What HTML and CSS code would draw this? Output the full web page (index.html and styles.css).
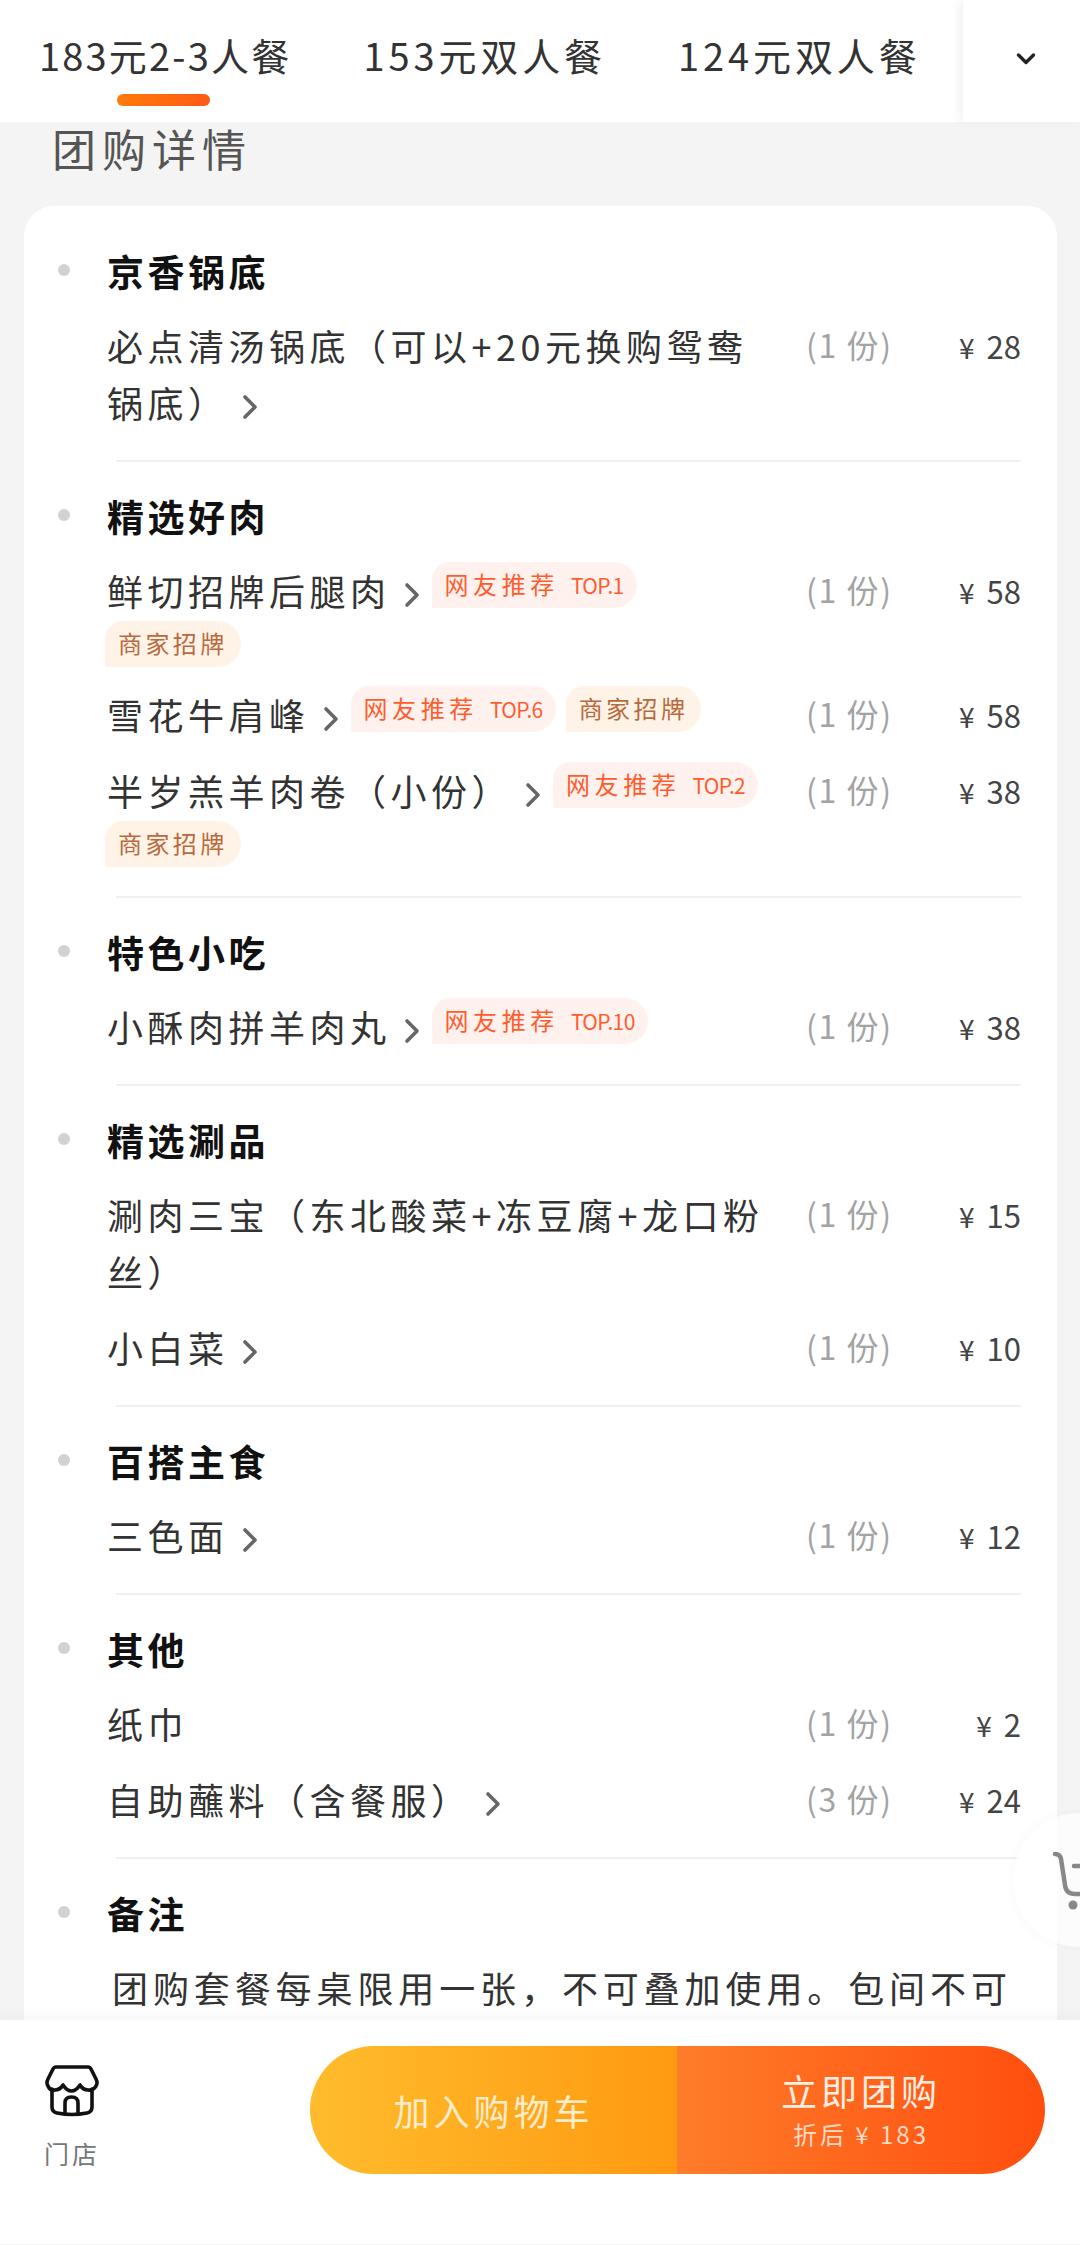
FILE: index.html
```html
<!DOCTYPE html>
<html lang="zh-CN">
<head>
  <meta charset="UTF-8" />
  <meta name="viewport" content="width=device-width, initial-scale=1.0"/>
  <title>团购详情</title>
  <link rel="stylesheet" href="styles.css">
</head>
<body>
  <svg class="sprite" width="0" height="0">
    <symbol id="chevron" viewBox="0 0 16 26">
      <path d="M3 3 L13 13 L3 23" fill="none" stroke="currentColor" stroke-width="3.6" stroke-linecap="round" stroke-linejoin="round"></path>
    </symbol>
  </svg>

  <div class="page">
    <header class="topBar">
      <div class="tabs">
        <span class="tab active">183元2-3人餐</span>
        <span class="tab">153元双人餐</span>
        <span class="tab">124元双人餐</span>
      </div>
      <div class="more">
        <svg width="20" height="14" viewBox="0 0 20 14">
          <path d="M2.5 3 L10 10.5 L17.5 3" fill="none" stroke="#222" stroke-width="3.4" stroke-linecap="round" stroke-linejoin="round"></path>
        </svg>
      </div>
    </header>

    <main class="content">
      <h2 class="title">团购详情</h2>

      <div class="card">
        <section class="group">
          <h3 class="groupHead"><i class="dot"></i>京香锅底</h3>
          <div class="row">
            <div class="name">必点清汤锅底（可以+20元换购鸳鸯锅底）<svg class="arrow"><use href="#chevron"></use></svg></div>
            <div class="qty">(1 份)</div>
            <div class="price"><small>¥</small>28</div>
          </div>
        </section>
        <hr class="divider">

        <section class="group">
          <h3 class="groupHead"><i class="dot"></i>精选好肉</h3>
          <div class="row">
            <div class="name">鲜切招牌后腿肉<svg class="arrow"><use href="#chevron"></use></svg><span class="tag hot">网友推荐<b>TOP.1</b></span><div class="tagLine"><span class="tag shop">商家招牌</span></div></div>
            <div class="qty">(1 份)</div>
            <div class="price"><small>¥</small>58</div>
          </div>
          <div class="row">
            <div class="name">雪花牛肩峰<svg class="arrow"><use href="#chevron"></use></svg><span class="tag hot">网友推荐<b>TOP.6</b></span><span class="tag shop">商家招牌</span></div>
            <div class="qty">(1 份)</div>
            <div class="price"><small>¥</small>58</div>
          </div>
          <div class="row">
            <div class="name">半岁羔羊肉卷（小份）<svg class="arrow"><use href="#chevron"></use></svg><span class="tag hot">网友推荐<b>TOP.2</b></span><div class="tagLine"><span class="tag shop">商家招牌</span></div></div>
            <div class="qty">(1 份)</div>
            <div class="price"><small>¥</small>38</div>
          </div>
        </section>
        <hr class="divider">

        <section class="group">
          <h3 class="groupHead"><i class="dot"></i>特色小吃</h3>
          <div class="row">
            <div class="name">小酥肉拼羊肉丸<svg class="arrow"><use href="#chevron"></use></svg><span class="tag hot">网友推荐<b>TOP.10</b></span></div>
            <div class="qty">(1 份)</div>
            <div class="price"><small>¥</small>38</div>
          </div>
        </section>
        <hr class="divider">

        <section class="group">
          <h3 class="groupHead"><i class="dot"></i>精选涮品</h3>
          <div class="row">
            <div class="name">涮肉三宝（东北酸菜+冻豆腐+龙口粉丝）</div>
            <div class="qty">(1 份)</div>
            <div class="price"><small>¥</small>15</div>
          </div>
          <div class="row">
            <div class="name">小白菜<svg class="arrow"><use href="#chevron"></use></svg></div>
            <div class="qty">(1 份)</div>
            <div class="price"><small>¥</small>10</div>
          </div>
        </section>
        <hr class="divider">

        <section class="group">
          <h3 class="groupHead"><i class="dot"></i>百搭主食</h3>
          <div class="row">
            <div class="name">三色面<svg class="arrow"><use href="#chevron"></use></svg></div>
            <div class="qty">(1 份)</div>
            <div class="price"><small>¥</small>12</div>
          </div>
        </section>
        <hr class="divider">

        <section class="group">
          <h3 class="groupHead"><i class="dot"></i>其他</h3>
          <div class="row">
            <div class="name">纸巾</div>
            <div class="qty">(1 份)</div>
            <div class="price"><small>¥</small>2</div>
          </div>
          <div class="row">
            <div class="name">自助蘸料（含餐服）<svg class="arrow"><use href="#chevron"></use></svg></div>
            <div class="qty">(3 份)</div>
            <div class="price"><small>¥</small>24</div>
          </div>
        </section>
        <hr class="divider">

        <section class="group">
          <h3 class="groupHead"><i class="dot"></i>备注</h3>
          <p class="note">团购套餐每桌限用一张，不可叠加使用。包间不可</p>
        </section>
      </div>
    </main>

    <footer class="bottomBar">
      <div class="store">
        <svg width="54" height="54" viewBox="0 0 54 54" fill="none" stroke="#111" stroke-width="3.6" stroke-linecap="round" stroke-linejoin="round">
          <path d="M11 3 H43 Q45 3 46 5 L51 15 Q53 19 51 22 Q48 27 43 26 Q38 26 35 21 Q31 27 26.5 27 Q22 27 18 21 Q15 26 10 26 Q5 27 3 22 Q1 19 3 15 L8 5 Q9 3 11 3 Z"></path>
          <path d="M7 25 V43 Q7 48 12 49 Q27 52 42 49 Q47 48 47 43 V25"></path>
          <path d="M20 49 V39 Q20 33 26.5 33 Q33 33 33 39 V49"></path>
        </svg>
        <span class="storeLabel">门店</span>
      </div>
      <div class="actions">
        <div class="addCart">加入购物车</div>
        <div class="buyNow">
          <span class="buyText">立即团购</span>
          <span class="buyPrice">折后 ¥ 183</span>
        </div>
      </div>
    </footer>

    <div class="cartFloat">
      <svg width="134" height="134" viewBox="0 0 134 134" fill="none" stroke="#888" stroke-width="4.5" stroke-linecap="round" stroke-linejoin="round">
        <path d="M42 41 Q47 41 48 46 L52 72 Q53 81 62 81 H90"></path>
        <path d="M61 53 H90"></path>
        <circle cx="60" cy="92" r="4.5" fill="#888" stroke="none"></circle>
      </svg>
    </div>
  </div>
</body>
</html>
```

FILE: styles.css
```css
* {
  box-sizing: border-box;
}

body {
  margin: 0;
  font-family: "Noto Sans CJK SC", "Noto Sans", sans-serif;
  color: #333;
}

.sprite {
  position: absolute;
}

.page {
  position: relative;
  display: flex;
  flex-direction: column;
  width: 1080px;
  height: 2245px;
  overflow: hidden;
  background-color: #f4f4f4;
}

/* top tabs */
.topBar {
  position: relative;
  z-index: 1;
  display: flex;
  justify-content: space-between;
  flex: none;
  height: 122px;
  background-color: #fff;
}

.tabs {
  display: flex;
  gap: 72px;
  padding-left: 39px;
}

.tab {
  position: relative;
  font-size: 38px;
  line-height: 110px;
  letter-spacing: 3.9px;
  color: #333;
  white-space: nowrap;
}

.tab.active {
  letter-spacing: 2.2px;
}

.tab.active::after {
  content: "";
  position: absolute;
  left: 78px;
  top: 94px;
  width: 93px;
  height: 12px;
  border-radius: 6px;
  background: linear-gradient(90deg, #ff7a0a, #ff5a14);
}

.more {
  display: flex;
  align-items: center;
  justify-content: center;
  width: 117px;
  padding: 0 0 4px 8px;
  background-color: #fff;
  box-shadow: -6px 0 8px rgba(0, 0, 0, 0.04);
}

/* content */
.content {
  flex: 1;
  min-height: 0;
}

.title {
  margin: 0 0 32px;
  padding-left: 52px;
  font-size: 44px;
  font-weight: 400;
  line-height: 52px;
  letter-spacing: 6px;
  color: #555;
}

.card {
  margin: 0 23px 0 24px;
  padding: 37px 36px 40px 34px;
  border-radius: 30px;
  background-color: #fff;
}

.groupHead {
  display: flex;
  align-items: center;
  gap: 37px;
  margin: 0 0 17px;
  font-size: 37px;
  font-weight: 700;
  line-height: 57px;
  letter-spacing: 3.5px;
  color: #111;
}

.dot {
  flex: none;
  width: 12px;
  height: 12px;
  margin-top: -4px;
  border-radius: 50%;
  background-color: #d2d2d2;
}

.row {
  display: grid;
  grid-template-columns: 665px 1fr auto;
  column-gap: 34px;
  margin: 0 0 19px 49px;
}

.group .row:last-child {
  margin-bottom: 0;
}

.name {
  font-size: 36px;
  line-height: 57px;
  letter-spacing: 4.5px;
  color: #333;
}

.arrow {
  display: inline-block;
  width: 16px;
  height: 26px;
  margin: 0 12px 0 13px;
  vertical-align: -2px;
  color: #666;
}

.tag {
  display: inline-block;
  height: 46px;
  margin-right: 10px;
  padding: 0 13px;
  border-radius: 18px 23px 23px 2px;
  font-size: 24px;
  line-height: 44px;
  letter-spacing: 4.6px;
  vertical-align: top;
  white-space: nowrap;
}

.tag b {
  margin-left: 12px;
  font-size: 21px;
  font-weight: 400;
  letter-spacing: -0.6px;
}

.tag.hot {
  background-color: #fff2ee;
  color: #ff5c2e;
}

.tag.shop {
  background-color: #fff3e8;
  color: #b9693c;
  letter-spacing: 3.4px;
}

.tagLine {
  height: 48px;
  margin-left: -2px;
  padding-top: 2px;
}

.qty {
  font-size: 32px;
  line-height: 54px;
  letter-spacing: 1.6px;
  color: #a3a3a3;
  white-space: nowrap;
}

.price {
  font-size: 31px;
  line-height: 57px;
  color: #444;
  white-space: nowrap;
  text-align: right;
}

.price small {
  margin-right: 12px;
  font-size: 28px;
  line-height: 0;
}

.divider {
  height: 2px;
  margin: 29px 0 26px 58px;
  border: 0;
  background-color: #f0f0f0;
}

.note {
  margin: 0 0 0 54px;
  font-size: 36px;
  line-height: 57px;
  letter-spacing: 4.9px;
  color: #333;
  white-space: nowrap;
}

/* bottom bar */
.bottomBar {
  position: relative;
  display: flex;
  justify-content: space-between;
  flex: none;
  height: 225px;
  padding: 26px 35px 0 45px;
  border-bottom: 1px solid #f4f4f4;
  background-color: #fff;
  box-shadow: 0 -4px 14px rgba(0, 0, 0, 0.04);
}

.store {
  display: flex;
  flex-direction: column;
  align-items: center;
  width: 54px;
  padding-top: 18px;
}

.storeLabel {
  margin-top: 18px;
  font-size: 25px;
  line-height: 34px;
  letter-spacing: 3px;
  color: #777;
  white-space: nowrap;
}

.actions {
  display: flex;
  width: 735px;
  height: 128px;
  border-radius: 64px;
  overflow: hidden;
  color: #fff;
}

.addCart {
  display: flex;
  align-items: center;
  justify-content: center;
  width: 367px;
  font-size: 36px;
  letter-spacing: 4px;
  color: #ffeccb;
  background: linear-gradient(90deg, #ffbc2c, #ff9a12);
}

.buyNow {
  display: flex;
  flex-direction: column;
  align-items: center;
  justify-content: center;
  width: 368px;
  background: linear-gradient(90deg, #ff7c2a, #ff4e0e);
}

.buyText {
  font-size: 36px;
  line-height: 48px;
  letter-spacing: 4px;
  color: #ffeee2;
}

.buyPrice {
  font-size: 24px;
  line-height: 40px;
  letter-spacing: 3px;
  color: #ffd9c4;
}

.cartFloat {
  position: absolute;
  left: 1013px;
  top: 1813px;
  width: 134px;
  height: 134px;
  border-radius: 50%;
  background-color: rgba(255, 255, 255, 0.75);
  box-shadow: 0 0 14px rgba(0, 0, 0, 0.03);
}
```
